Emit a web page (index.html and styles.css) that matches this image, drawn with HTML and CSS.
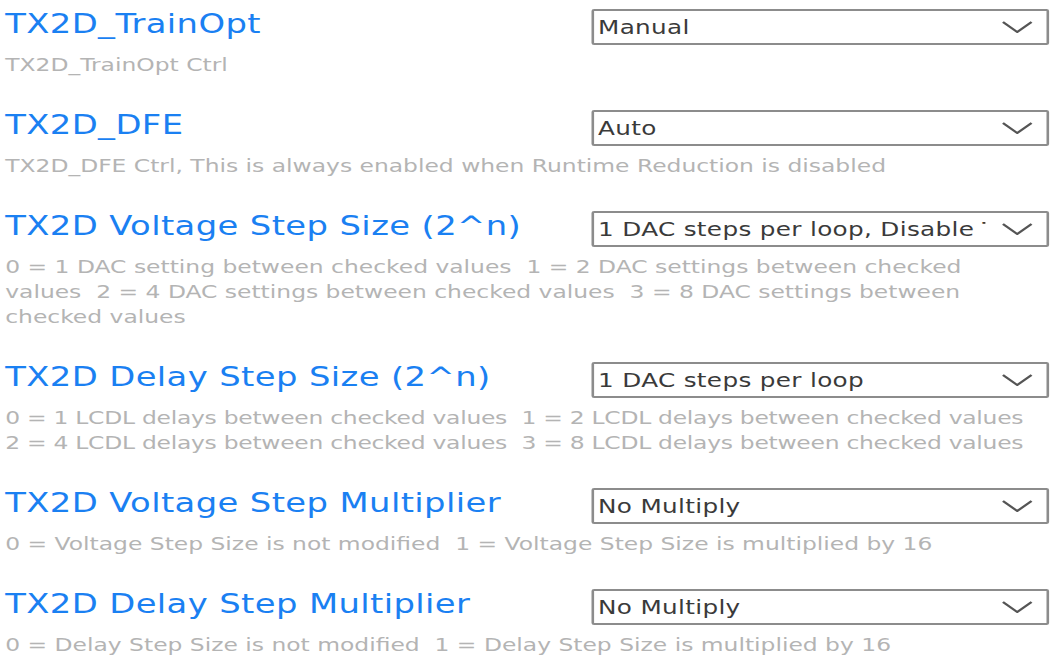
FILE: index.html
```html
<!DOCTYPE html>
<html lang="en">
<head>
  <meta charset="UTF-8">
  <title>TX2D Training Options</title>
  <link rel="stylesheet" href="styles.css">
</head>
<body>
  <div class="page">
    <div class="setting">
      <div class="setting-head">
        <h2 class="setting-name">TX2D_TrainOpt</h2>
        <div class="dropdown"><span class="dropdown-value">Manual</span><svg class="chevron" viewBox="0 0 24 12"><path d="M1 1 L12 11 L23 1"/></svg></div>
      </div>
      <p class="setting-help">TX2D_TrainOpt Ctrl</p>
    </div>

    <div class="setting">
      <div class="setting-head">
        <h2 class="setting-name">TX2D_DFE</h2>
        <div class="dropdown"><span class="dropdown-value">Auto</span><svg class="chevron" viewBox="0 0 24 12"><path d="M1 1 L12 11 L23 1"/></svg></div>
      </div>
      <p class="setting-help">TX2D_DFE Ctrl, This is always enabled when Runtime Reduction is disabled</p>
    </div>

    <div class="setting">
      <div class="setting-head">
        <h2 class="setting-name">TX2D Voltage Step Size (2^n)</h2>
        <div class="dropdown"><span class="dropdown-value">1 DAC steps per loop, Disable Training</span><svg class="chevron" viewBox="0 0 24 12"><path d="M1 1 L12 11 L23 1"/></svg></div>
      </div>
      <p class="setting-help">0 = 1 DAC setting between checked values&nbsp; 1 = 2 DAC settings between checked<br>values&nbsp; 2 = 4 DAC settings between checked values&nbsp; 3 = 8 DAC settings between<br>checked values</p>
    </div>

    <div class="setting">
      <div class="setting-head">
        <h2 class="setting-name">TX2D Delay Step Size (2^n)</h2>
        <div class="dropdown"><span class="dropdown-value">1 DAC steps per loop</span><svg class="chevron" viewBox="0 0 24 12"><path d="M1 1 L12 11 L23 1"/></svg></div>
      </div>
      <p class="setting-help tight">0 = 1 LCDL delays between checked values&nbsp; 1 = 2 LCDL delays between checked values<br>2 = 4 LCDL delays between checked values&nbsp; 3 = 8 LCDL delays between checked values</p>
    </div>

    <div class="setting">
      <div class="setting-head">
        <h2 class="setting-name">TX2D Voltage Step Multiplier</h2>
        <div class="dropdown"><span class="dropdown-value">No Multiply</span><svg class="chevron" viewBox="0 0 24 12"><path d="M1 1 L12 11 L23 1"/></svg></div>
      </div>
      <p class="setting-help">0 = Voltage Step Size is not modified&nbsp; 1 = Voltage Step Size is multiplied by 16</p>
    </div>

    <div class="setting">
      <div class="setting-head">
        <h2 class="setting-name">TX2D Delay Step Multiplier</h2>
        <div class="dropdown"><span class="dropdown-value">No Multiply</span><svg class="chevron" viewBox="0 0 24 12"><path d="M1 1 L12 11 L23 1"/></svg></div>
      </div>
      <p class="setting-help">0 = Delay Step Size is not modified&nbsp; 1 = Delay Step Size is multiplied by 16</p>
    </div>
  </div>
</body>
</html>
```

FILE: styles.css
```css
body {
  margin: 0;
  padding: 0;
  background: #fff;
  font-family: "DejaVu Sans", sans-serif;
  overflow: hidden;
}
/* the whole panel is drawn a bit wide, like the stretched setup screen */
.page {
  width: 815px;
  box-sizing: border-box;
  padding: 9px 8px 0 4px;
  transform: scaleX(1.3);
  transform-origin: left top;
}
.setting {
  margin-bottom: 33px;
}
.setting-head {
  display: flex;
  justify-content: space-between;
  align-items: flex-start;
}
.setting-name {
  margin: 4px 0 0;
  font-size: 26px;
  line-height: 22px;
  font-weight: normal;
  letter-spacing: 0.3px;
  color: #1a80f2;
  white-space: nowrap;
}
.dropdown {
  display: flex;
  align-items: center;
  width: 352px;
  height: 36px;
  box-sizing: border-box;
  border: 2px solid #8c8c8c;
  border-radius: 2px;
  padding: 0 10px 0 3px;
  flex-shrink: 0;
}
.dropdown-value {
  flex: 1;
  overflow: hidden;
  white-space: nowrap;
  font-size: 19px;
  letter-spacing: 0.25px;
  color: #3a3a3a;
  margin-right: 12px;
}
.chevron {
  width: 25px;
  height: 12px;
  flex-shrink: 0;
}
.chevron path {
  fill: none;
  stroke: #555;
  stroke-width: 2;
}
.setting-help {
  margin: 7px 0 0;
  font-size: 18px;
  line-height: 25px;
  color: #b4b4b4;
  white-space: nowrap;
}
.setting-help.tight {
  letter-spacing: -0.2px;
}
```
